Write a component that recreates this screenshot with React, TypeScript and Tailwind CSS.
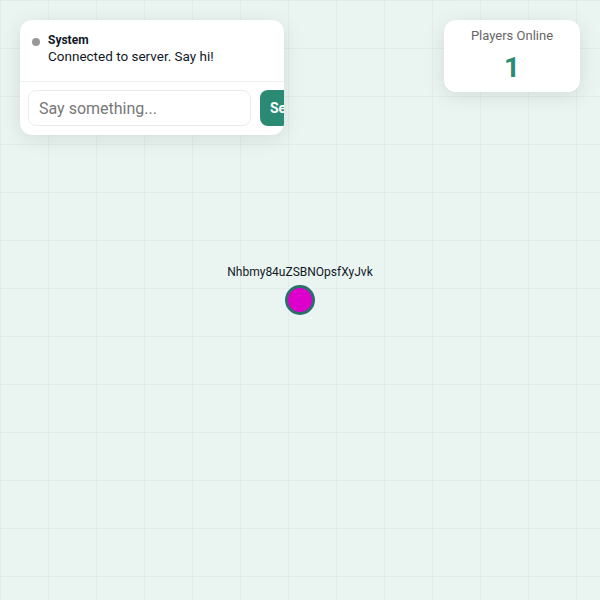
export default function App() {
  return (
    <div
      className="relative w-[600px] h-[600px] overflow-hidden bg-[#eaf5f2]"
      style={{
        fontFamily: "Roboto, 'Liberation Sans', sans-serif",
        backgroundImage:
          "linear-gradient(to right, rgba(0,0,0,0.035) 1px, transparent 1px), linear-gradient(to bottom, rgba(0,0,0,0.035) 1px, transparent 1px)",
        backgroundSize: "48px 48px",
      }}
    >
      {/* Chat panel */}
      <div className="absolute left-[20px] top-[20px] w-[264px] h-[115px] bg-white rounded-[12px] shadow-[0_4px_20px_rgba(0,0,0,0.1)] overflow-hidden flex flex-col">
        <div className="h-[62px] shrink-0 border-b border-[#eef0f0] px-[12px] pt-[13px] flex gap-[8px]">
          <div className="w-[8px] h-[8px] rounded-full bg-[#999] mt-[5px] shrink-0" />
          <div className="flex flex-col">
            <span className="text-[12px] leading-[14px] font-bold text-[#111827]">System</span>
            <span className="text-[13.5px] leading-[16px] text-[#111827] mt-[1px]">Connected to server. Say hi!</span>
          </div>
        </div>
        <div className="flex gap-[9px] pl-[8px] pt-[8px] shrink-0">
          <input
            placeholder="Say something..."
            className="w-[223px] h-[36px] shrink-0 rounded-[8px] border border-[#e8ecec] px-[10px] text-[16px] text-[#111] placeholder:text-[#777] outline-none"
          />
          <button className="h-[36px] px-[10px] shrink-0 rounded-[8px] bg-[#2a8a73] text-white font-bold text-[14px]">
            Send
          </button>
        </div>
      </div>

      {/* Players Online */}
      <div className="absolute left-[444px] top-[20px] w-[136px] h-[72px] bg-white rounded-[12px] shadow-[0_4px_20px_rgba(0,0,0,0.1)] flex flex-col items-center pt-[8px]">
        <span className="text-[13px] leading-[16px] text-[#666]">Players Online</span>
        <span className="text-[28px] leading-[36px] font-bold text-[#2a8a73] mt-[6px]">1</span>
      </div>

      {/* Player */}
      <div className="absolute left-[200px] top-[264px] w-[200px] flex flex-col items-center">
        <span className="text-[12px] leading-[16px] text-[#111827]">Nhbmy84uZSBNOpsfXyJvk</span>
        <div className="mt-[5px] w-[30px] h-[30px] rounded-full bg-[#dd00cc] border-[3px] border-[#2b6e6c]" />
      </div>
    </div>
  );
}
